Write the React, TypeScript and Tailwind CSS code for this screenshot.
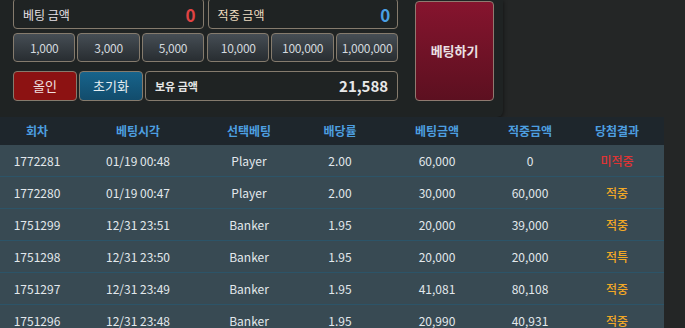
import React from "react";

const chips = ["1,000", "3,000", "5,000", "10,000", "100,000", "1,000,000"];

const rows = [
  ["1772281", "01/19 00:48", "Player", "2.00", "60,000", "0", "미적중"],
  ["1772280", "01/19 00:47", "Player", "2.00", "30,000", "60,000", "적중"],
  ["1751299", "12/31 23:51", "Banker", "1.95", "20,000", "39,000", "적중"],
  ["1751298", "12/31 23:50", "Banker", "1.95", "20,000", "20,000", "적특"],
  ["1751297", "12/31 23:49", "Banker", "1.95", "41,081", "80,108", "적중"],
  ["1751296", "12/31 23:48", "Banker", "1.95", "20,990", "40,931", "적중"],
];

const cols = ["w-[74px]", "w-[128px]", "w-[94px]", "w-[88px]", "w-[106px]", "w-[80px]", "w-[94px]"];
const heads = ["회차", "베팅시각", "선택베팅", "배당률", "베팅금액", "적중금액", "당첨결과"];

export default function App() {
  return (
    <div
      className="w-[685px] h-[328px] overflow-hidden bg-[#242626] text-[12px]"
      style={{ fontFamily: '"Noto Sans CJK KR", "Noto Sans", sans-serif' }}
    >
      <div className="w-[503px] h-[117px] bg-[#1f2323] rounded-br-[6px] shadow-[0_1px_4px_rgba(0,0,0,0.6)] flex pl-[13px] pr-[9px]">
        <div className="w-[386px] flex flex-col">
          <div className="flex gap-[4px] -mt-[2px] h-[31px]">
            <div className="flex-1 border border-[#857b6d] rounded-[4px] flex items-center justify-between pl-[9px] pr-[7px] pt-[2px]">
              <span className="text-[#e6e0e6] text-[12px]">베팅 금액</span>
              <span className="text-[#e04343] font-bold text-[17px]">0</span>
            </div>
            <div className="flex-1 border border-[#857b6d] rounded-[4px] flex items-center justify-between pl-[9px] pr-[7px] pt-[2px]">
              <span className="text-[#eedcc0] text-[12px]">적중 금액</span>
              <span className="text-[#4a9fe3] font-bold text-[17px]">0</span>
            </div>
          </div>
          <div className="flex gap-[2px] mt-[4px] h-[29px]">
            {chips.map((c, i) => (
              <div
                key={c}
                className={`${i === 3 ? "ml-[1px]" : ""} flex-1 border border-[#857b6d] rounded-[4px] bg-gradient-to-b from-[#464e55] to-[#282d31] flex items-center justify-center text-[#d2d8de] text-[12px] tracking-[-0.3px]`}
              >
                {c}
              </div>
            ))}
          </div>
          <div className="flex gap-[2px] mt-[9px] h-[30px]">
            <div className="w-[64px] border border-[#857b6d] rounded-[4px] bg-[#8c1212] flex items-center justify-center text-[#f0e0e0] text-[13px]">
              올인
            </div>
            <div className="w-[64px] border border-[#857b6d] rounded-[4px] bg-gradient-to-b from-[#17648c] to-[#124c6c] flex items-center justify-center text-[#e6eef2] text-[13px]">
              초기화
            </div>
            <div className="flex-1 border border-[#857b6d] rounded-[4px] flex items-center justify-between px-[9px]">
              <span className="text-[#e6e6e6] text-[11px] font-bold">보유 금액</span>
              <span className="text-[#e8e8e8] font-bold text-[15px]">21,588</span>
            </div>
          </div>
        </div>
        <div className="ml-[17px] mt-[1px] w-[79px] h-[100px] border border-[#8f7a70] rounded-[4px] bg-gradient-to-b from-[#86142e] to-[#5c1020] flex items-center justify-center text-[#ebe0e4] font-bold text-[13px]">
          베팅하기
        </div>
      </div>
      <div className="w-[664px]">
        <div className="flex h-[28px] bg-[#1e262c] items-center">
          {heads.map((h, i) => (
            <div key={h} className={`${cols[i]} text-center text-[#4d9fe0] font-bold text-[12px]`}>
              {h}
            </div>
          ))}
        </div>
        {rows.map((r) => (
          <div key={r[0]} className="flex h-[32px] bg-[#384a53] border-b border-[#2c5468] items-center">
            {r.map((c, i) => (
              <div
                key={i}
                className={`${cols[i]} text-center text-[12px] ${
                  i === 6
                    ? c === "미적중"
                      ? "text-[#e03434] font-medium"
                      : "text-[#f2a826] font-medium"
                    : "text-[#e2e8ec]"
                }`}
              >
                {c}
              </div>
            ))}
          </div>
        ))}
      </div>
    </div>
  );
}
